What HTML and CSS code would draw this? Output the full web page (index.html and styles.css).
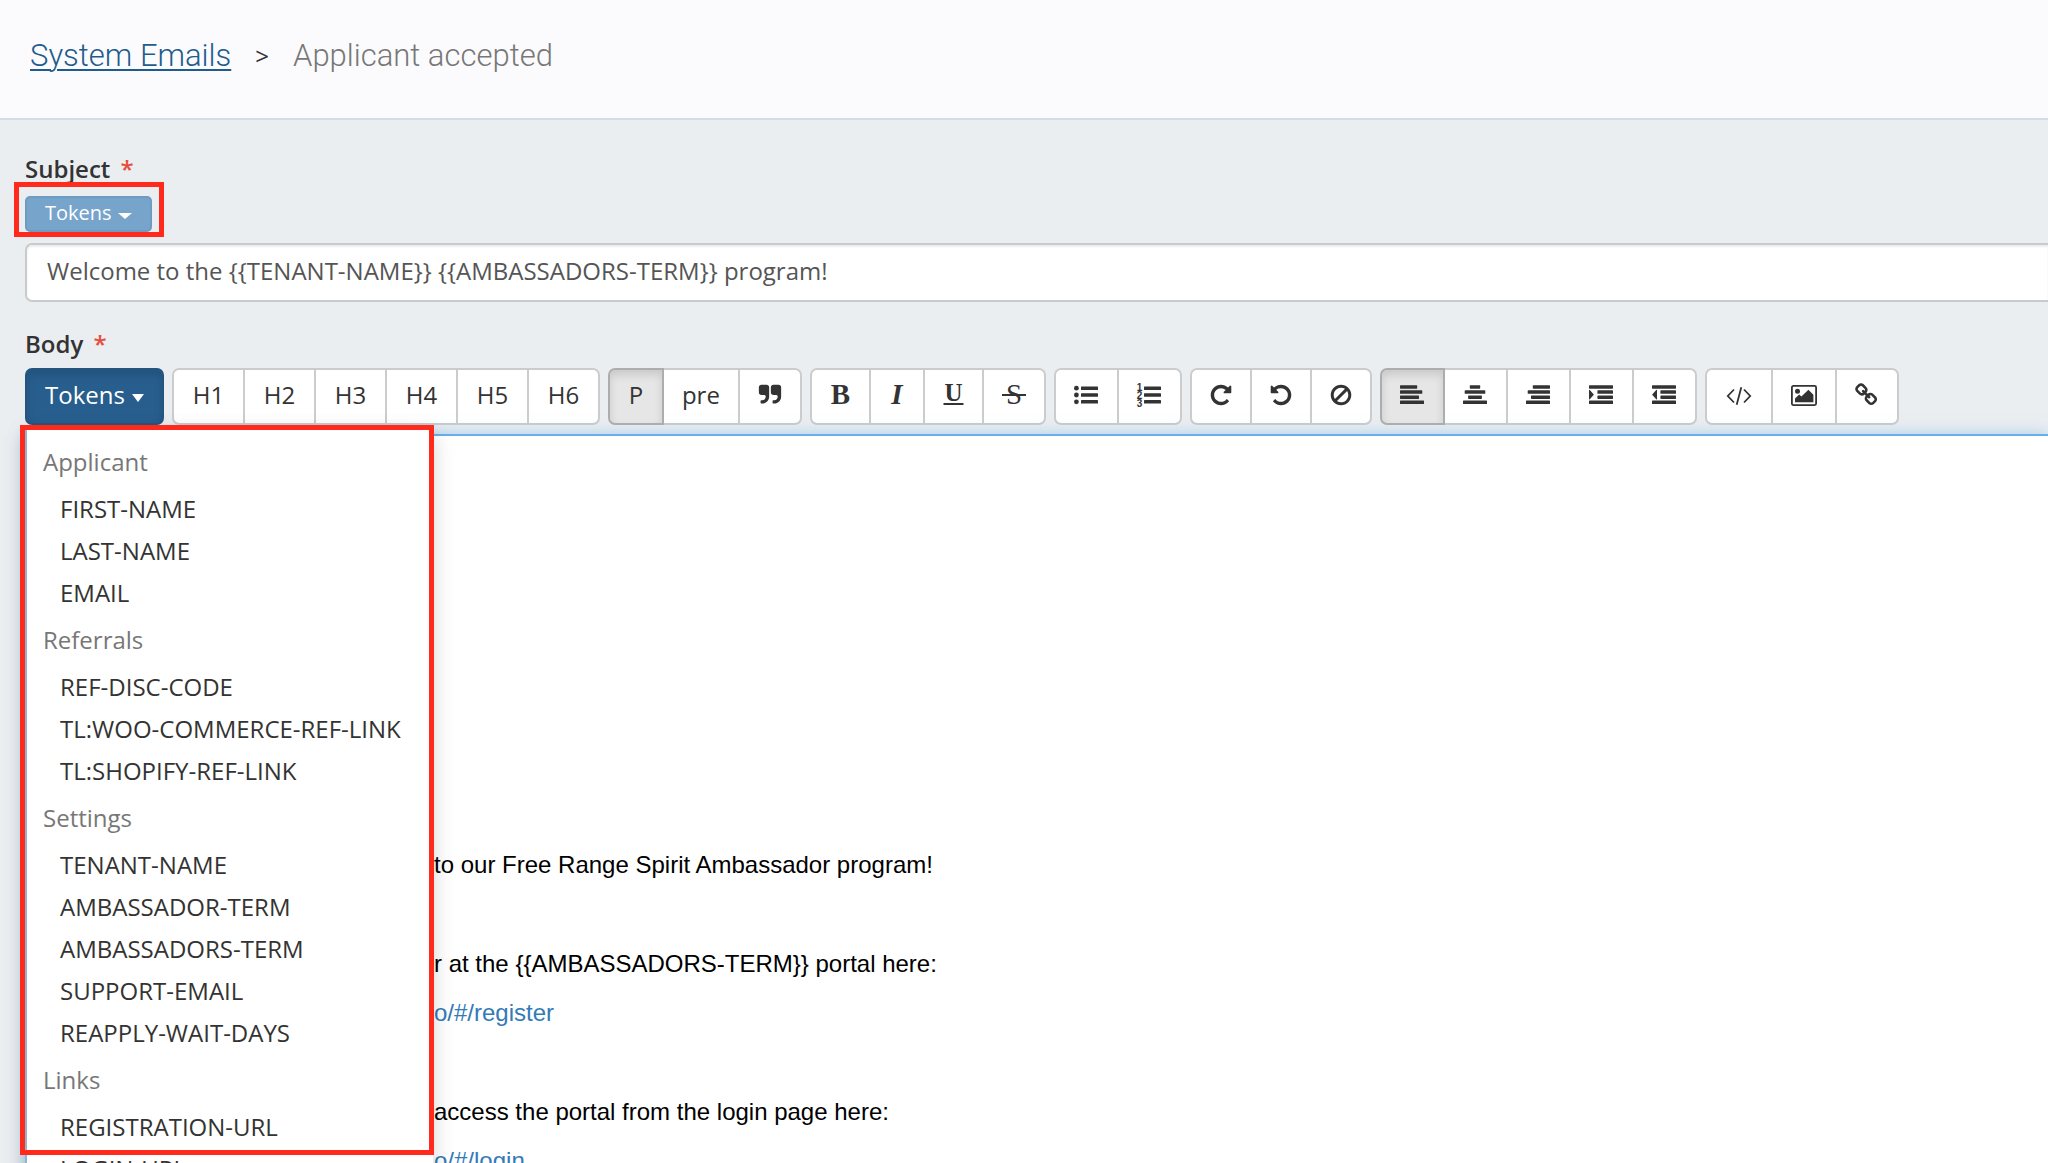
FILE: index.html
```html
<!DOCTYPE html>
<html lang="en">
<head>
<meta charset="utf-8">
<meta name="viewport" content="width=device-width, initial-scale=1">
<title>System Emails - Applicant accepted</title>
<link rel="stylesheet" href="styles.css">
</head>
<body>
<header class="page-header">
  <nav class="breadcrumb" aria-label="Breadcrumb">
    <a href="#">System Emails</a>
    <span class="separator">&gt;</span>
    <h1>Applicant accepted</h1>
  </nav>
</header>

<main class="content">
  <div class="field">
    <label for="subject">Subject <span class="required">*</span></label>
    <div class="token-row">
      <button type="button" class="token-btn token-btn-small">Tokens <span class="caret"></span></button>
      <div class="highlight highlight-button"></div>
    </div>
    <input id="subject" class="subject-input" type="text" value="Welcome to the {{TENANT-NAME}} {{AMBASSADORS-TERM}} program!">
  </div>

  <div class="field field-body">
    <label id="body-label">Body <span class="required">*</span></label>
    <div class="toolbar" role="toolbar" aria-label="Formatting">
      <div class="dropdown">
        <button type="button" class="token-btn" aria-expanded="true">Tokens <span class="caret"></span></button>
        <div class="menu">
          <h2>Applicant</h2>
          <ul>
            <li><a href="#">FIRST-NAME</a></li>
            <li><a href="#">LAST-NAME</a></li>
            <li><a href="#">EMAIL</a></li>
          </ul>
          <h2>Referrals</h2>
          <ul>
            <li><a href="#">REF-DISC-CODE</a></li>
            <li><a href="#">TL:WOO-COMMERCE-REF-LINK</a></li>
            <li><a href="#">TL:SHOPIFY-REF-LINK</a></li>
          </ul>
          <h2>Settings</h2>
          <ul>
            <li><a href="#">TENANT-NAME</a></li>
            <li><a href="#">AMBASSADOR-TERM</a></li>
            <li><a href="#">AMBASSADORS-TERM</a></li>
            <li><a href="#">SUPPORT-EMAIL</a></li>
            <li><a href="#">REAPPLY-WAIT-DAYS</a></li>
          </ul>
          <h2>Links</h2>
          <ul>
            <li><a href="#">REGISTRATION-URL</a></li>
            <li><a href="#">LOGIN-URL</a></li>
          </ul>
        </div>
        <div class="highlight highlight-menu"></div>
      </div>

      <div class="group headings">
        <button type="button">H1</button>
        <button type="button">H2</button>
        <button type="button">H3</button>
        <button type="button">H4</button>
        <button type="button">H5</button>
        <button type="button">H6</button>
      </div>

      <div class="group">
        <button type="button" class="active">P</button>
        <button type="button">pre</button>
        <button type="button" aria-label="Quote"><svg class="icon" viewBox="-64 0 1792 1792"><path d="M768 320v704q0 104-40.5 198.5t-109.5 163.5-163.5 109.5-198.5 40.5h-64q-26 0-45-19t-19-45v-128q0-26 19-45t45-19h64q106 0 181-75t75-181v-32q0-40-28-68t-68-28h-224q-80 0-136-56t-56-136v-384q0-80 56-136t136-56h384q80 0 136 56t56 136zm896 0v704q0 104-40.5 198.5t-109.5 163.5-163.5 109.5-198.5 40.5h-64q-26 0-45-19t-19-45v-128q0-26 19-45t45-19h64q106 0 181-75t75-181v-32q0-40-28-68t-68-28h-224q-80 0-136-56t-56-136v-384q0-80 56-136t136-56h384q80 0 136 56t56 136z"/></svg></button>
      </div>

      <div class="group">
        <button type="button" aria-label="Bold"><svg class="icon icon-medium" viewBox="0 0 20 24"><text class="letter bold" x="10" y="21">B</text></svg></button>
        <button type="button" aria-label="Italic"><svg class="icon icon-narrow" viewBox="0 0 16 24"><text class="letter bold italic" x="8" y="21">I</text></svg></button>
        <button type="button" aria-label="Underline"><svg class="icon icon-medium" viewBox="0 0 20 24"><text class="letter small bold" x="10" y="18">U</text><path d="M0 20h20v2H0z"/></svg></button>
        <button type="button" aria-label="Strikethrough"><svg class="icon" viewBox="0 0 24 24"><text class="letter" x="12" y="21">S</text><path d="M0 11h24v2H0z"/></svg></button>
      </div>

      <div class="group">
        <button type="button" class="wide" aria-label="Bulleted list"><svg class="icon" viewBox="0 0 24 24"><circle cx="2.4" cy="5.2" r="2.4"/><circle cx="2.4" cy="12" r="2.4"/><circle cx="2.4" cy="18.8" r="2.4"/><rect x="7" y="3.5" width="17" height="3.5" rx=".6"/><rect x="7" y="10.3" width="17" height="3.5" rx=".6"/><rect x="7" y="17.1" width="17" height="3.5" rx=".6"/></svg></button>
        <button type="button" class="wide" aria-label="Numbered list"><svg class="icon" viewBox="0 0 24 24"><text class="digit" x="2.5" y="8">1</text><text class="digit" x="2.5" y="16">2</text><text class="digit" x="2.5" y="24">3</text><rect x="7" y="3.5" width="17" height="3.5" rx=".6"/><rect x="7" y="10.3" width="17" height="3.5" rx=".6"/><rect x="7" y="17.1" width="17" height="3.5" rx=".6"/></svg></button>
      </div>

      <div class="group">
        <button type="button" class="tight" aria-label="Redo"><svg class="icon" viewBox="0 0 1792 1792"><path d="M1664 256v448q0 26-19 45t-45 19h-448q-42 0-59-40-17-39 14-69l138-138q-148-137-349-137-104 0-198.5 40.5t-163.5 109.5-109.5 163.5-40.5 198.5 40.5 198.5 109.5 163.5 163.5 109.5 198.5 40.5q119 0 225-52t179-147q7-10 23-12 15 0 25 9l137 138q9 8 9.5 20.5t-7.5 22.5q-109 132-264 204.5t-327 72.5q-156 0-298-61t-245-164-164-245-61-298 61-298 164-245 245-164 298-61q147 0 284.5 55.5t244.5 156.5l130-129q29-31 70-14 39 17 39 59z"/></svg></button>
        <button type="button" class="tight" aria-label="Undo"><svg class="icon" viewBox="0 0 1792 1792"><path d="M1664 896q0 156-61 298t-164 245-245 164-298 61q-172 0-327-72.5t-264-204.5q-7-10-6.5-22.5t8.5-20.5l137-138q10-9 25-9 16 2 23 12 73 95 179 147t225 52q104 0 198.5-40.5t163.5-109.5 109.5-163.5 40.5-198.5-40.5-198.5-109.5-163.5-163.5-109.5-198.5-40.5q-98 0-188 35.5t-160 101.5l137 138q31 30 14 69-17 40-59 40h-448q-26 0-45-19t-19-45v-448q0-42 40-59 39-17 69 14l130 129q107-101 244.5-156.5t284.5-55.5q156 0 298 61t245 164 164 245 61 298z"/></svg></button>
        <button type="button" class="tight" aria-label="Clear formatting"><svg class="icon" viewBox="0 0 1792 1792"><path d="M1440 893q0-161-87-295l-754 753q137 89 297 89 111 0 211.5-43.5t173.5-116.5 116-174.5 43-212.5zm-999 299l755-754q-135-91-300-91-148 0-273 73t-198 199-73 274q0 162 89 299zm1223-299q0 157-61 300t-163.5 246-245 164-298.5 61-298.5-61-245-164-163.5-246-61-300 61-299.5 163.5-245.5 245-164 298.5-61 298.5 61 245 164 163.5 245.5 61 299.5z"/></svg></button>
      </div>

      <div class="group">
        <button type="button" class="wide active" aria-label="Align left"><svg class="icon" viewBox="0 0 24 24"><rect y="2.2" width="17.2" height="3.5" rx=".6"/><rect y="7.3" width="22.3" height="3.5" rx=".6"/><rect y="12.4" width="19" height="3.5" rx=".6"/><rect y="17.5" width="24" height="3.5" rx=".6"/></svg></button>
        <button type="button" class="wide" aria-label="Align center"><svg class="icon" viewBox="0 0 24 24"><rect x="6.8" y="2.2" width="10.4" height="3.5" rx=".6"/><rect x="1.7" y="7.3" width="20.6" height="3.5" rx=".6"/><rect x="5.1" y="12.4" width="13.8" height="3.5" rx=".6"/><rect y="17.5" width="24" height="3.5" rx=".6"/></svg></button>
        <button type="button" class="wide" aria-label="Align right"><svg class="icon" viewBox="0 0 24 24"><rect x="6.8" y="2.2" width="17.2" height="3.5" rx=".6"/><rect x="1.7" y="7.3" width="22.3" height="3.5" rx=".6"/><rect x="5" y="12.4" width="19" height="3.5" rx=".6"/><rect y="17.5" width="24" height="3.5" rx=".6"/></svg></button>
        <button type="button" class="wide" aria-label="Indent"><svg class="icon" viewBox="0 0 24 24"><rect y="2.2" width="24" height="3.5" rx=".6"/><rect x="8.4" y="7.3" width="15.6" height="3.5" rx=".6"/><rect x="8.4" y="12.4" width="15.6" height="3.5" rx=".6"/><rect y="17.5" width="24" height="3.5" rx=".6"/><path d="M0 7.3Q0 6.5.8 7L4.600 11.200Q5 11.600 4.600 12L.8 16.200Q0 16.700 0 15.900z"/></svg></button>
        <button type="button" class="wide" aria-label="Outdent"><svg class="icon" viewBox="0 0 24 24"><rect y="2.2" width="24" height="3.5" rx=".6"/><rect x="8.4" y="7.3" width="15.6" height="3.5" rx=".6"/><rect x="8.4" y="12.4" width="15.6" height="3.5" rx=".6"/><rect y="17.5" width="24" height="3.5" rx=".6"/><path d="M5 7.300Q5 6.500 4.200 7L.4 11.200Q0 11.600 .4 12L4.200 16.200Q5 16.700 5 15.900z"/></svg></button>
      </div>

      <div class="group">
        <button type="button" class="widest" aria-label="View HTML"><svg class="icon icon-large" viewBox="0 0 26 24"><path class="stroke" d="M8 6.500 1.800 13 8 19.500M18 6.500 24.200 13 18 19.500M15.300 4.200 10.700 21.800"/></svg></button>
        <button type="button" aria-label="Insert image"><svg class="icon icon-large" viewBox="0 0 26 24"><rect class="stroke" x=".9" y="2.900" width="24.200" height="19.200" rx="1.500"/><circle cx="6.500" cy="8.200" r="2.500"/><path d="M4 19.200v-3.600l4.200-4.200 2.200 2.200 7-6.800 5 5v7.400z"/></svg></button>
        <button type="button" aria-label="Insert link"><svg class="icon" viewBox="0 0 1792 1792"><path d="M1456 1216q0-40-28-68l-208-208q-28-28-68-28-42 0-72 32 3 3 19 18.500t21.500 21.500 15 19 13 25.500 3.500 27.500q0 40-28 68t-68 28q-15 0-27.500-3.500t-25.500-13-19-15-21.500-21.500-18.500-19q-33 31-33 73 0 40 28 68l206 207q27 27 68 27 40 0 68-26l147-146q28-28 28-67zm-703-705q0-40-28-68l-206-207q-28-28-68-28-39 0-68 27l-147 146q-28 28-28 67 0 40 28 68l208 208q27 27 68 27 42 0 72-31-3-3-19-18.500t-21.500-21.500-15-19-13-25.500-3.500-27.500q0-40 28-68t68-28q15 0 27.500 3.500t25.500 13 19 15 21.500 21.500 18.500 19q33-31 33-73zm895 705q0 120-85 203l-147 146q-83 83-203 83-121 0-204-85l-206-207q-83-83-83-203 0-123 88-209l-88-88q-86 88-208 88-120 0-204-84l-208-208q-84-84-84-204t85-203l147-146q83-83 203-83 121 0 204 85l206 207q83 83 83 203 0 123-88 209l88 88q86-88 208-88 120 0 204 84l208 208q84 84 84 204z"/></svg></button>
      </div>
    </div>

    <div class="editor" contenteditable="true" role="textbox" aria-multiline="true" aria-labelledby="body-label">
      <p>to our Free Range Spirit Ambassador program!</p>
      <p>r at the {{AMBASSADORS-TERM}} portal here:<br><a href="#">o/#/register</a></p>
      <p>access the portal from the login page here:<br><a href="#">o/#/login</a></p>
    </div>
  </div>
</main>
</body>
</html>
```
FILE: styles.css
```css
* {
  box-sizing: border-box;
}

body {
  margin: 0;
  height: 100vh;
  overflow: hidden;
  display: flex;
  flex-direction: column;
  background: #ebeef1;
  color: #333;
  font-family: "Open Sans", "Noto Sans", sans-serif;
  font-size: 24px;
  line-height: 32px;
}

button,
input {
  font: inherit;
  color: inherit;
}

.page-header {
  flex: none;
  padding: 36px 30px 42px;
  background: #fbfbfd;
  border-bottom: 2px solid #cfdee6;
}

.breadcrumb {
  display: flex;
  align-items: center;
  gap: 24px;
  font-family: Roboto, "Open Sans", sans-serif;
  font-size: 31px;
  font-weight: 300;
  line-height: 40px;
}

.breadcrumb a {
  color: #1f5c8d;
  text-decoration-thickness: 2px;
  text-underline-offset: 3px;
}

.breadcrumb h1 {
  margin: 0;
  color: #777;
  font: inherit;
}

.separator {
  font-family: "Open Sans", sans-serif;
  font-size: 24px;
  font-weight: 400;
}

.content {
  flex: 1;
  display: flex;
  flex-direction: column;
  padding: 33px 0 0 25px;
}

.field label {
  display: block;
  font-weight: 600;
}

.required {
  margin-left: 4px;
  color: #e74c3c;
}

.field-body {
  flex: 1;
  display: flex;
  flex-direction: column;
  margin-top: 26px;
}

.token-row {
  position: relative;
  display: flex;
  margin: 11px 0;
}

.token-btn {
  display: flex;
  align-items: center;
  gap: 7px;
  height: 57px;
  padding: 0 18px 3px;
  border: 2px solid #245580;
  border-radius: 7px;
  background: #285e8e;
  box-shadow: inset 0 5px 8px rgba(0, 0, 0, .125);
  color: #fff;
  font-weight: 500;
}

.token-btn-small {
  gap: 6px;
  height: 36px;
  border-color: #6e9bc2;
  border-radius: 5px;
  background: #76a4cb;
  box-shadow: none;
  font-size: 20px;
  line-height: 30px;
}

.caret {
  margin-top: 6px;
  border: 6px solid transparent;
  border-top: 8px solid #fff;
  border-bottom: 0;
}

.token-btn-small .caret {
  border-width: 6px 7px 0;
}

.subject-input {
  display: block;
  width: 100%;
  height: 59px;
  padding: 0 20px 5px;
  border: 2px solid #c8cbcc;
  border-right: 0;
  border-radius: 7px 0 0 7px;
  background: #fff;
  box-shadow: inset 0 2px 2px rgba(0, 0, 0, .075);
  color: #555;
}

.toolbar {
  display: flex;
  gap: 8px;
  margin: 8px 0 9px;
}

.dropdown {
  position: relative;
}

.group {
  display: flex;
}

.group button {
  display: flex;
  align-items: center;
  justify-content: center;
  min-width: 56px;
  height: 57px;
  padding: 0 18px 3px;
  border: 2px solid #ccc;
  background: #fff;
}

.group button + button {
  margin-left: -2px;
}

.group button:first-child {
  border-radius: 7px 0 0 7px;
}

.group button:last-child {
  border-radius: 0 7px 7px 0;
}

.group.headings button {
  min-width: 73px;
}

.group .wide {
  min-width: 65px;
}

.group .widest {
  min-width: 68px;
}

.group .tight {
  width: 62px;
}

.group .active {
  z-index: 1;
  border-color: #adadad;
  background: #e6e6e6;
  box-shadow: inset 0 5px 8px rgba(0, 0, 0, .125);
}

.icon {
  flex: none;
  width: 24px;
  height: 24px;
  fill: #333;
  overflow: visible;
}

.icon-narrow {
  width: 16px;
}

.icon-medium {
  width: 21px;
}

.icon-large {
  width: 26px;
}

.stroke {
  fill: none;
  stroke: #333;
  stroke-width: 1.8;
}

.letter {
  font-family: "Liberation Serif", serif;
  font-size: 29px;
  text-anchor: middle;
}

.small {
  font-size: 25px;
}

.bold {
  font-weight: 700;
}

.italic {
  font-style: italic;
}

.digit {
  font-family: "Liberation Sans", sans-serif;
  font-size: 10px;
  font-weight: 700;
  text-anchor: middle;
}

.menu {
  position: absolute;
  z-index: 2;
  top: 100%;
  left: 0;
  width: 408px;
  padding: 11px 0;
  background: #fff;
  border-left: 2px solid #8ab6d8;
  box-shadow: 0 10px 20px rgba(0, 0, 0, .175);
}

.menu h2 {
  margin: 0;
  padding: 0 16px;
  color: #777;
  font-size: 24px;
  font-weight: 400;
  line-height: 52px;
}

.menu ul {
  margin: 0;
  padding: 0;
  list-style: none;
}

.menu a {
  display: block;
  padding: 0 33px;
  color: #333;
  line-height: 42px;
  text-decoration: none;
  white-space: nowrap;
}

/* Callout frames laid over the token controls */
.highlight {
  position: absolute;
  z-index: 3;
  border: 5px solid #ff2a1c;
  pointer-events: none;
}

.highlight-button {
  top: -14px;
  left: -11px;
  width: 150px;
  height: 55px;
}

.highlight-menu {
  top: 100%;
  left: -5px;
  width: 414px;
  height: 730px;
}

.editor {
  flex: 1;
  padding: 404px 20px 0 407px;
  border: 2px solid #66afe9;
  border-right: 0;
  background: #fff;
  box-shadow: 0 0 14px rgba(102, 175, 233, .5);
  color: #000;
  font-family: "Liberation Sans", Arial, sans-serif;
  line-height: 49px;
  outline: 0;
}

.editor p {
  margin: 0 0 50px;
}

.editor a {
  color: #337ab7;
  text-decoration: none;
}
```
